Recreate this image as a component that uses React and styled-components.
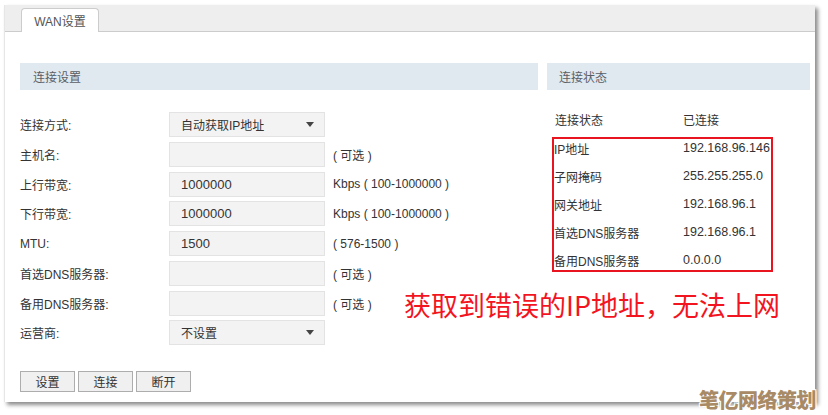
import React from "react";
import styled, { createGlobalStyle } from "styled-components";

const GlobalStyle = createGlobalStyle`
  html, body {
    margin: 0;
    padding: 0;
    background: #fff;
    font-family: "Liberation Sans", "Noto Sans CJK SC", sans-serif;
  }
`;

const Page = styled.div`
  position: relative;
  width: 828px;
  height: 415px;
  overflow: hidden;
  padding: 5px 0 0 4px;
  box-sizing: border-box;
`;

const Window = styled.div`
  position: relative;
  width: 811px;
  height: 397px;
  background: #fff;
  border-left: 1px solid #e6e6e6;
  box-sizing: border-box;
  box-shadow: 3px 3px 4px rgba(0, 0, 0, 0.45);
`;

const TabBar = styled.div`
  display: flex;
  align-items: flex-end;
  height: 27px;
  padding-left: 16px;
  background: #eeeeee;
  border-bottom: 1px solid #cccccc;
  box-sizing: border-box;
`;

const Tab = styled.div`
  width: 78px;
  height: 24px;
  margin-bottom: -1px;
  display: flex;
  align-items: center;
  justify-content: center;
  background: #fff;
  border: 1px solid #cccccc;
  border-bottom: none;
  border-radius: 4px 4px 0 0;
  box-sizing: border-box;
  font-size: 12px;
  color: #555;
`;

const Body = styled.div`
  display: grid;
  grid-template-columns: 518px 263px;
  column-gap: 9px;
  padding: 31px 5px 0 15px;
`;

const Column = styled.div`
  display: flex;
  flex-direction: column;
`;

const SectionHeader = styled.div`
  height: 27px;
  display: flex;
  align-items: center;
  padding-left: ${(p) => p.$indent}px;
  background: #e1e9f0;
  font-size: 12px;
  color: #5a5f66;
`;

const Form = styled.div`
  display: grid;
  grid-template-columns: 141px 156px auto;
  grid-auto-rows: 25px;
  row-gap: 4.75px;
  column-gap: 8px;
  margin-top: 22px;
  align-items: center;
`;

const Label = styled.div`
  font-size: 12px;
  color: #333;
`;

const Field = styled.div`
  height: 25px;
  display: flex;
  align-items: center;
  justify-content: space-between;
  padding: 0 10px 0 11px;
  background: #f3f3f3;
  border: 1px solid #e3e3e3;
  box-sizing: border-box;
  font-size: ${(p) => (p.$select ? 12 : 13)}px;
  color: #333;
`;

const Caret = styled.span`
  width: 0;
  height: 0;
  border-left: 4px solid transparent;
  border-right: 4px solid transparent;
  border-top: 5px solid #444;
`;

const Hint = styled.div`
  font-size: 12px;
  color: #333;
  white-space: nowrap;
`;

const Buttons = styled.div`
  display: flex;
  gap: 3px;
  margin-top: 26px;
`;

const Button = styled.button`
  width: 55px;
  height: 21px;
  padding: 0;
  background: #f0f0f0;
  border: 1px solid #adadad;
  font-family: inherit;
  font-size: 12px;
  color: #333;
`;

const StatusRow = styled.div`
  display: grid;
  grid-template-columns: ${(p) => p.$labelWidth}px auto;
  align-items: center;
  height: 18px;
  padding-left: ${(p) => p.$pad}px;
  font-size: 12px;
  color: #333;
`;

const Value = styled.span`
  font-size: 12.5px;
`;

const Highlight = styled.div`
  width: 221px;
  height: 135px;
  margin: 9px 0 0 5px;
  border: 2px solid #e8141f;
  box-sizing: border-box;
  display: flex;
  flex-direction: column;
  gap: 10px;
`;

const Note = styled.div`
  position: absolute;
  left: 399px;
  top: 280px;
  font-family: "Noto Sans CJK SC", sans-serif;
  font-size: 27px;
  color: #f2141e;
  white-space: nowrap;
`;

const Watermark = styled.div`
  position: absolute;
  right: 12px;
  bottom: 1px;
  font-family: "Noto Sans CJK SC", sans-serif;
  font-weight: 900;
  font-size: 20px;
  letter-spacing: -0.5px;
  color: #a88b66;
  text-shadow: 1px 1px 0 #fff, -1px -1px 0 #fff, 1px -1px 0 #fff, -1px 1px 0 #fff;
`;

const fields = [
  { label: "连接方式:", value: "自动获取IP地址", select: true },
  { label: "主机名:", value: "", hint: "( 可选 )" },
  { label: "上行带宽:", value: "1000000", hint: "Kbps ( 100-1000000 )" },
  { label: "下行带宽:", value: "1000000", hint: "Kbps ( 100-1000000 )" },
  { label: "MTU:", value: "1500", hint: "( 576-1500 )" },
  { label: "首选DNS服务器:", value: "", hint: "( 可选 )" },
  { label: "备用DNS服务器:", value: "", hint: "( 可选 )" },
  { label: "运营商:", value: "不设置", select: true },
];

const status = [
  ["IP地址", "192.168.96.146"],
  ["子网掩码", "255.255.255.0"],
  ["网关地址", "192.168.96.1"],
  ["首选DNS服务器", "192.168.96.1"],
  ["备用DNS服务器", "0.0.0.0"],
];

export default function App() {
  return (
    <Page>
      <GlobalStyle />
      <Window>
        <TabBar>
          <Tab>WAN设置</Tab>
        </TabBar>
        <Body>
          <Column>
            <SectionHeader $indent={13}>连接设置</SectionHeader>
            <Form>
              {fields.map((f) => (
                <React.Fragment key={f.label}>
                  <Label>{f.label}</Label>
                  <Field $select={f.select}>
                    <span>{f.value}</span>
                    {f.select && <Caret />}
                  </Field>
                  <Hint>{f.hint}</Hint>
                </React.Fragment>
              ))}
            </Form>
            <Buttons>
              <Button>设置</Button>
              <Button>连接</Button>
              <Button>断开</Button>
            </Buttons>
          </Column>
          <Column>
            <SectionHeader $indent={12}>连接状态</SectionHeader>
            <StatusRow $labelWidth={128} $pad={8} style={{ marginTop: 20 }}>
              <span>连接状态</span>
              <span>已连接</span>
            </StatusRow>
            <Highlight>
              {status.map(([k, v]) => (
                <StatusRow key={k} $labelWidth={129} $pad={0}>
                  <span>{k}</span>
                  <Value>{v}</Value>
                </StatusRow>
              ))}
            </Highlight>
          </Column>
        </Body>
        <Note>获取到错误的IP地址，无法上网</Note>
      </Window>
      <Watermark>笔亿网络策划</Watermark>
    </Page>
  );
}
